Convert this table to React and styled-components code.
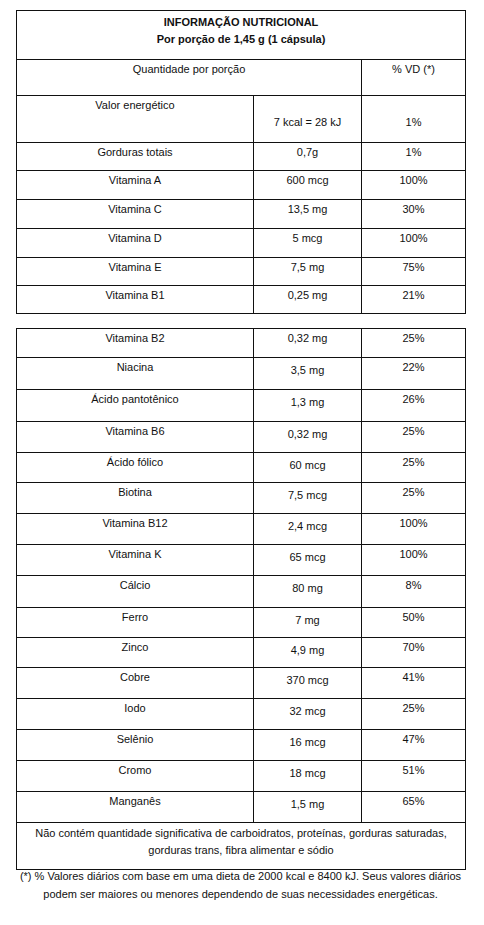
import styled, { createGlobalStyle } from "styled-components";

const GlobalStyle = createGlobalStyle`
	body {
		margin: 0;
		background: #fff;
		font-family: "Liberation Sans", Arial, sans-serif;
		color: #111;
	}
`;

const Page = styled.div`
	width: 449px;
	padding: 10px 19px 0 16px;
`;

const Table = styled.table`
	width: 449px;
	border-collapse: collapse;
	table-layout: fixed;
	font-size: 11px;
	line-height: 17px;
	margin-bottom: ${(p) => p.$gap || 0}px;
`;

const Row = styled.tr`
	height: ${(p) => p.$h}px;
`;

const Cell = styled.td`
	border: 1px solid #111;
	text-align: center;
	vertical-align: top;
	padding: ${(p) => p.$pad || 1}px 2px 0;
	font-weight: ${(p) => (p.$bold ? 700 : 400)};
`;

const Note = styled.p`
	margin: -3px 0 0;
	width: 449px;
	text-align: center;
	font-size: 11px;
	line-height: 18px;
`;

const first = [
	["Gorduras totais", "0,7g", "1%", 28],
	["Vitamina A", "600 mcg", "100%", 29],
	["Vitamina C", "13,5 mg", "30%", 29],
	["Vitamina D", "5 mcg", "100%", 29],
	["Vitamina E", "7,5 mg", "75%", 28],
	["Vitamina B1", "0,25 mg", "21%", 28],
];

const second = [
	["Vitamina B2", "0,32 mg", "25%", 29, false],
	["Niacina", "3,5 mg", "22%", 32, true],
	["Ácido pantotênico", "1,3 mg", "26%", 32, true],
	["Vitamina B6", "0,32 mg", "25%", 31, true],
	["Ácido fólico", "60 mcg", "25%", 30, true],
	["Biotina", "7,5 mcg", "25%", 31, true],
	["Vitamina B12", "2,4 mcg", "100%", 31, true],
	["Vitamina K", "65 mcg", "100%", 31, true],
	["Cálcio", "80 mg", "8%", 32, true],
	["Ferro", "7 mg", "50%", 30, true],
	["Zinco", "4,9 mg", "70%", 30, true],
	["Cobre", "370 mcg", "41%", 31, true],
	["Iodo", "32 mcg", "25%", 31, true],
	["Selênio", "16 mcg", "47%", 31, true],
	["Cromo", "18 mcg", "51%", 31, true],
	["Manganês", "1,5 mg", "65%", 31, true],
];

const Cols = () => (
	<colgroup>
		<col style={{ width: 237 }} />
		<col style={{ width: 108 }} />
		<col style={{ width: 104 }} />
	</colgroup>
);

export default function App() {
	return (
		<Page>
			<GlobalStyle />
			<Table $gap={14}>
				<Cols />
				<tbody>
					<Row $h={49}>
						<Cell colSpan={3} $bold $pad={3}>
							INFORMAÇÃO NUTRICIONAL
							<br />
							Por porção de 1,45 g (1 cápsula)
						</Cell>
					</Row>
					<Row $h={36}>
						<Cell colSpan={2}>Quantidade por porção</Cell>
						<Cell>% VD (*)</Cell>
					</Row>
					<Row $h={47}>
						<Cell>Valor energético</Cell>
						<Cell $pad={18}>7 kcal = 28 kJ</Cell>
						<Cell $pad={18}>1%</Cell>
					</Row>
					{first.map(([name, amount, vd, h]) => (
						<Row key={name} $h={h}>
							<Cell>{name}</Cell>
							<Cell>{amount}</Cell>
							<Cell>{vd}</Cell>
						</Row>
					))}
				</tbody>
			</Table>
			<Table>
				<Cols />
				<tbody>
					{second.map(([name, amount, vd, h, low]) => (
						<Row key={name} $h={h}>
							<Cell>{name}</Cell>
							<Cell $pad={low ? 4 : 1}>{amount}</Cell>
							<Cell>{vd}</Cell>
						</Row>
					))}
					<Row $h={47}>
						<Cell colSpan={3} $pad={2}>
							Não contém quantidade significativa de carboidratos, proteínas, gorduras saturadas,
							<br />
							gorduras trans, fibra alimentar e sódio
						</Cell>
					</Row>
				</tbody>
			</Table>
			<Note>
				(*) % Valores diários com base em uma dieta de 2000 kcal e 8400 kJ. Seus valores diários
				<br />
				podem ser maiores ou menores dependendo de suas necessidades energéticas.
			</Note>
		</Page>
	);
}
